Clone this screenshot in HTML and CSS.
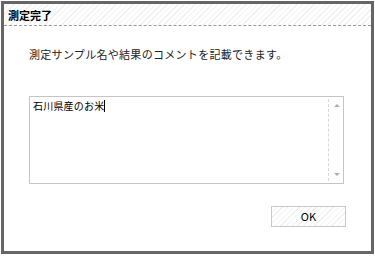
FILE: index.html
```html
<!DOCTYPE html>
<html lang="ja">
<head>
<meta charset="utf-8">
<link rel="stylesheet" href="styles.css">
</head>
<body>
<div class="dialog">
  <div class="titlebar"><span class="title">測定完了</span></div>
  <div class="content">
    <p class="message">測定サンプル名や結果のコメントを記載できます。</p>
    <div class="memo">
      <div class="memo-text">石川県産のお米<span class="caret"></span></div>
      <div class="scrollbar">
        <span class="arrow up"></span>
        <span class="arrow down"></span>
      </div>
    </div>
    <div class="actions">
      <button class="btn">OK</button>
    </div>
  </div>
</div>
</body>
</html>
```
FILE: styles.css
```css
html, body {
  margin: 0;
  padding: 0;
  background: #ffffff;
  width: 375px;
  height: 256px;
  overflow: hidden;
}
body {
  font-family: "Noto Sans CJK JP", "Noto Sans", sans-serif;
  color: #111;
}
.dialog {
  margin: 1px 0 0 1px;
  width: 373px;
  height: 253px;
  box-sizing: border-box;
  border: 3px solid #666666;
  background: #fff;
  display: flex;
  flex-direction: column;
}
.titlebar {
  height: 21px;
  border-bottom: 1px dashed #9a9a9a;
  background: repeating-linear-gradient(135deg, #ffffff 0px, #ffffff 3px, #f0f0f0 3px, #f0f0f0 4px);
  display: flex;
  align-items: center;
  padding-left: 4px;
}
.title {
  font-size: 11px;
  font-weight: bold;
  line-height: 14px;
  color: #000;
}
.content {
  padding: 21px 0 0 25px;
  display: flex;
  flex-direction: column;
}
.message {
  margin: 0;
  font-size: 11px;
  line-height: 14px;
  letter-spacing: 0.3px;
  color: #222;
}
.memo {
  margin-top: 35px;
  width: 315px;
  height: 88px;
  box-sizing: border-box;
  border: 1px solid #c4c4c4;
  display: flex;
}
.memo-text {
  flex: 1;
  padding: 2px 0 0 3px;
  font-size: 10px;
  line-height: 14px;
  letter-spacing: 0.2px;
  color: #000;
  display: flex;
  align-items: flex-start;
}
.caret {
  display: inline-block;
  width: 1px;
  height: 12px;
  margin-top: 1px;
  background: #000;
}
.scrollbar {
  width: 13px;
  margin: 2px 0;
  border-left: 1px dashed #d8d8d8;
  display: flex;
  flex-direction: column;
  justify-content: space-between;
  align-items: center;
  padding: 5px 0 5px 1px;
}
.arrow {
  width: 0;
  height: 0;
  border-left: 3px solid transparent;
  border-right: 3px solid transparent;
}
.arrow.up { border-bottom: 3px solid #b0b0b0; }
.arrow.down { border-top: 3px solid #b0b0b0; }
.actions {
  margin-top: 22px;
  width: 317px;
  display: flex;
  justify-content: flex-end;
}
.btn {
  width: 75px;
  height: 21px;
  box-sizing: border-box;
  border: 1px solid #c8c8c8;
  background: repeating-linear-gradient(135deg, #ffffff 0px, #ffffff 3px, #f0f0f0 3px, #f0f0f0 4px);
  font-family: "Noto Sans CJK JP", "Noto Sans", sans-serif;
  font-size: 11px;
  color: #000;
  padding: 0;
  line-height: 19px;
}
```
